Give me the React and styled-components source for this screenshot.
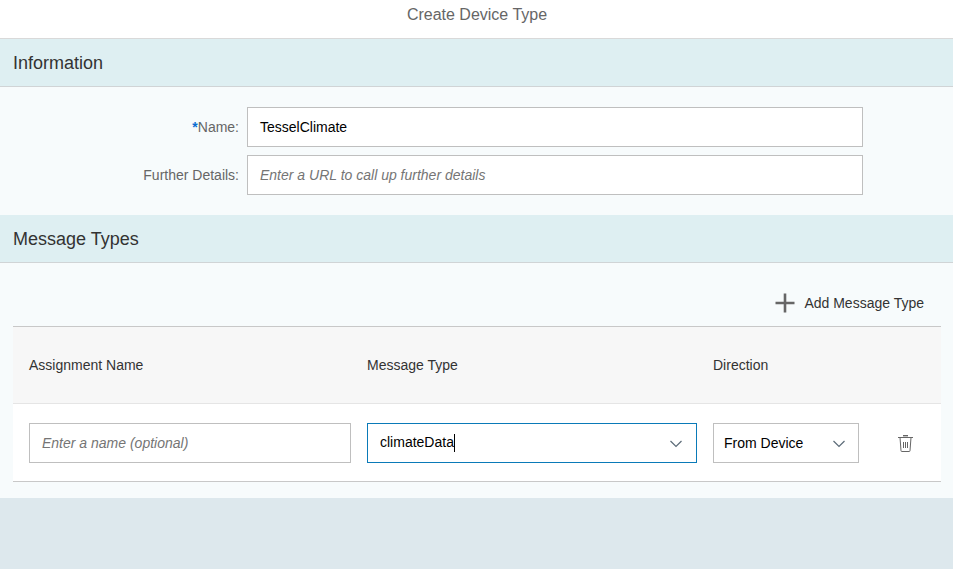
import React from "react";
import styled, { createGlobalStyle } from "styled-components";

const Global = createGlobalStyle`
  html, body { margin: 0; padding: 0; background: #dde8ed; }
  body { font-family: "Liberation Sans", Arial, sans-serif; }
  * { box-sizing: border-box; }
`;
const Page = styled.div`
  width: 953px;
  height: 569px;
  overflow: hidden;
  display: flex;
  flex-direction: column;
  background: #dde8ed;
`;
const TitleBar = styled.header`
  height: 39px;
  flex: none;
  background: #fff;
  border-bottom: 1px solid #d9d9d9;
  display: flex;
  justify-content: center;
  align-items: center;
  padding-bottom: 10px;
  padding-top: 1px;
  padding-left: 1px;
  font-size: 16px;
  color: #666;
`;
const SectionHeader = styled.h2`
  margin: 0;
  height: 48px;
  flex: none;
  background: #deeff2;
  border-bottom: 1px solid #d0d4d6;
  padding: 1px 13px 0;
  display: flex;
  align-items: center;
  font-size: 18px;
  font-weight: 400;
  color: #333;
`;
const InfoForm = styled.section`
  height: 128px;
  flex: none;
  background: #f7fbfc;
  padding-top: 20px;
  display: flex;
  flex-direction: column;
  gap: 8px;
`;
const FormRow = styled.div`
  display: grid;
  grid-template-columns: 239px 616px;
  column-gap: 8px;
  align-items: center;
`;
const Label = styled.label`
  text-align: right;
  font-size: 14px;
  color: #666;
`;
const Star = styled.span`
  color: #0a6ed1;
  font-weight: 700;
`;
const Field = styled.div`
  height: 40px;
  background: #fff;
  border: 1px solid ${(p) => (p.$focused ? "#0a7ab8" : "#bfbfbf")};
  padding: 0 ${(p) => (p.$select ? "10px" : "12px")};
  display: flex;
  align-items: center;
  justify-content: space-between;
  font-size: 14px;
  color: ${(p) => (p.$placeholder ? "#757575" : "#000")};
  font-style: ${(p) => (p.$placeholder ? "italic" : "normal")};
`;
const Caret = styled.span`
  display: inline-block;
  width: 1px;
  height: 18px;
  background: #000;
  vertical-align: middle;
`;
const Panel = styled.section`
  height: 235px;
  flex: none;
  background: #f7fbfc;
  padding: 0 12px 0 13px;
`;
const Toolbar = styled.div`
  height: 64px;
  display: flex;
  justify-content: flex-end;
  align-items: center;
  gap: 9px;
  padding: 16px 17px 0 0;
  border-bottom: 1px solid #c8c8c8;
  font-size: 14px;
  color: #333;
`;
const Grid = `
  display: grid;
  grid-template-columns: 338px 346px 1fr;
  padding-left: 16px;
`;
const HeadRow = styled.div`
  ${Grid}
  height: 77px;
  align-items: center;
  background: #f7f7f7;
  border-bottom: 1px solid #e5e5e5;
  font-size: 14px;
  color: #333;
`;
const BodyRow = styled.div`
  ${Grid}
  height: 78px;
  padding-top: 19px;
  background: #fff;
  border-bottom: 1px solid #c8c8c8;
  align-items: start;
`;
const NameField = styled(Field)`
  width: 322px;
`;
const TypeField = styled(Field)`
  width: 330px;
  padding-right: 14px;
`;
const DirectionCell = styled.div`
  display: flex;
  align-items: center;
  gap: 39px;
`;
const DirectionField = styled(Field)`
  width: 146px;
  padding-right: 13px;
`;
const TrashButton = styled.span`
  display: flex;
  color: #666;
`;
const ChevronMark = styled.svg`
  flex: none;
  margin-top: 1px;
`;

const Chevron = () => (
  <ChevronMark width="12" height="8" viewBox="0 0 12 8" fill="none" stroke="#5c6b78" strokeWidth="1.2">
    <path d="M0.5 1 6 6.5 11.5 1" />
  </ChevronMark>
);
const Plus = () => (
  <svg width="20" height="20" viewBox="0 0 20 20" fill="none" stroke="#666" strokeWidth="2.6">
    <path d="M0.5 10h19M10 0.5v19" />
  </svg>
);
const Trash = () => (
  <svg width="15" height="17" viewBox="0 0 15 17" fill="none" stroke="currentColor" strokeWidth="1">
    <path d="M0 2.5h15" />
    <path d="M5 0.7h5" strokeWidth="1.4" />
    <path d="M2 2.5l1 13.2a.8.8 0 0 0 .8.8h7.4a.8.8 0 0 0 .8-.8l1-13.2" />
    <path d="M5.5 7v6M7.5 7v6M9.5 7v6" />
  </svg>
);

export default function App() {
  return (
    <Page>
      <Global />
      <TitleBar>Create Device Type</TitleBar>
      <SectionHeader>Information</SectionHeader>
      <InfoForm>
        <FormRow>
          <Label><Star>*</Star>Name:</Label>
          <Field>TesselClimate</Field>
        </FormRow>
        <FormRow>
          <Label>Further Details:</Label>
          <Field $placeholder>Enter a URL to call up further details</Field>
        </FormRow>
      </InfoForm>
      <SectionHeader>Message Types</SectionHeader>
      <Panel>
        <Toolbar><Plus />Add Message Type</Toolbar>
        <HeadRow>
          <span>Assignment Name</span>
          <span>Message Type</span>
          <span>Direction</span>
        </HeadRow>
        <BodyRow>
          <NameField $placeholder>Enter a name (optional)</NameField>
          <TypeField $focused>
            <span>climateData<Caret /></span>
            <Chevron />
          </TypeField>
          <DirectionCell>
            <DirectionField $select>From Device<Chevron /></DirectionField>
            <TrashButton><Trash /></TrashButton>
          </DirectionCell>
        </BodyRow>
      </Panel>
    </Page>
  );
}
